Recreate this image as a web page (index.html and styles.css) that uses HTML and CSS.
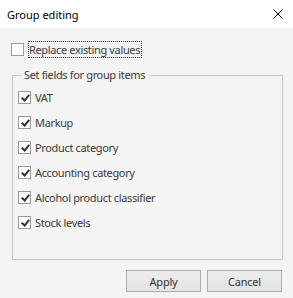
FILE: index.html
```html
<!DOCTYPE html>
<html lang="en">
<head>
  <meta charset="UTF-8">
  <title>Group editing</title>
  <link rel="stylesheet" href="styles.css">
</head>
<body>
  <div class="dlg">
    <div class="dlg-title">
      <span class="dlg-caption">Group editing</span>
      <svg class="dlg-close" width="10" height="10" viewBox="0 0 10 10">
        <path d="M0.5 0.5 L9.5 9.5 M9.5 0.5 L0.5 9.5" stroke="#000" stroke-width="1" fill="none"/>
      </svg>
    </div>

    <div class="dlg-body">
      <!-- Replace option -->
      <div class="chk-row chk-top">
        <span class="chk"></span>
        <span class="chk-label chk-focus">Replace existing values</span>
      </div>

      <fieldset class="grp">
        <legend class="grp-legend">Set fields for group items</legend>
        <div class="chk-row"><span class="chk chk-on"></span><span class="chk-label">VAT</span></div>
        <div class="chk-row"><span class="chk chk-on"></span><span class="chk-label">Markup</span></div>
        <div class="chk-row"><span class="chk chk-on"></span><span class="chk-label">Product category</span></div>
        <div class="chk-row"><span class="chk chk-on"></span><span class="chk-label">Accounting category</span></div>
        <div class="chk-row"><span class="chk chk-on"></span><span class="chk-label">Alcohol product classifier</span></div>
        <div class="chk-row"><span class="chk chk-on"></span><span class="chk-label">Stock levels</span></div>
      </fieldset>

      <div class="dlg-buttons">
        <button class="btn">Apply</button>
        <button class="btn">Cancel</button>
      </div>
    </div>
  </div>
</body>
</html>
```

FILE: styles.css
```css
body {
  margin: 0;
  padding: 0;
  background-color: #f4f4f4;
}

.dlg {
  width: 293px;
  height: 298px;
  font-family: 'Noto Sans', sans-serif;
  font-size: 11px;
  letter-spacing: -0.35px;
  color: #3a3a3a;
}

/* Title bar */
.dlg-title {
  height: 28px;
  background-color: #fff;
  display: flex;
  align-items: center;
  justify-content: space-between;
  padding: 0 10px 0 7px;
}

.dlg-caption {
  color: #000;
  font-size: 11px;
  letter-spacing: 0;
}

.dlg-body {
  padding-top: 13px;
}

/* Checkboxes */
.chk-row {
  display: flex;
  align-items: center;
  height: 17px;
  gap: 4px;
}

.chk-top {
  padding-left: 11px;
}

.chk {
  width: 11px;
  height: 11px;
  border: 1px solid #9a9a9a;
  background-color: #fff;
  flex-shrink: 0;
  position: relative;
}

.chk-on::after {
  content: '';
  position: absolute;
  left: 4px;
  top: 1px;
  width: 3px;
  height: 6px;
  border-right: 2px solid #333;
  border-bottom: 2px solid #333;
  transform: rotate(40deg);
}

.chk-label {
  line-height: 15px;
  white-space: nowrap;
}

.chk-focus {
  border: 1px dotted #333;
  padding: 0 1px 0 0;
}

/* Group box */
.grp {
  margin: 9px 10px 0 12px;
  padding: 6px 0 28px 5px;
  border: 1px solid #c8c8c8;
  display: flex;
  flex-direction: column;
  gap: 8px;
}

.grp-legend {
  padding: 0 5px 0 2px;
  margin-left: 4px;
  line-height: 16px;
}

/* Buttons */
.dlg-buttons {
  display: flex;
  justify-content: flex-end;
  gap: 6px;
  margin-top: 10px;
  padding-right: 11px;
}

.btn {
  width: 75px;
  height: 22px;
  font-family: 'Noto Sans', sans-serif;
  font-size: 11px;
  letter-spacing: -0.2px;
  color: #333;
  background: linear-gradient(#ececec, #e3e3e3);
  border: 1px solid #adadad;
  padding: 0;
}
```
